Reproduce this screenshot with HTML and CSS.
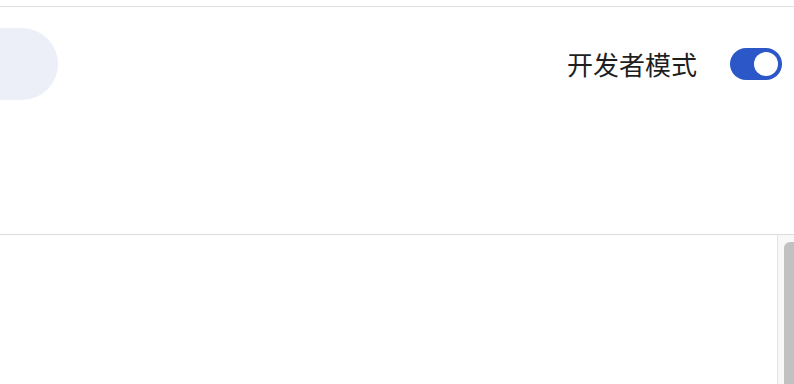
FILE: index.html
```html
<!DOCTYPE html>
<html lang="zh-CN">
<head>
    <meta charset="UTF-8">
    <meta name="viewport" content="width=device-width, initial-scale=1.0">
    <title>扩展程序</title>
    <link rel="stylesheet" href="styles.css">
</head>
<body>
    <div class="top-strip"></div>
    <header class="toolbar">
        <div class="toolbar-row">
            <div class="search-pill"></div>
            <div class="dev-mode">
                <span class="dev-label">开发者模式</span>
                <label class="switch">
                    <input type="checkbox" checked>
                    <span class="knob"></span>
                </label>
            </div>
        </div>
    </header>
    <main class="content">
        <div class="list"></div>
        <div class="scrollbar">
            <div class="thumb"></div>
        </div>
    </main>
</body>
</html>
```

FILE: styles.css
```css
body {
    margin: 0;
    font-family: "Noto Sans CJK SC", "Noto Sans", sans-serif;
    background: #ffffff;
    overflow: hidden;
    height: 384px;
    display: flex;
    flex-direction: column;
}

.top-strip {
    flex-shrink: 0;
    height: 6px;
    background: #ffffff;
}

.toolbar {
    flex-shrink: 0;
    border-top: 1px solid #dfdfe1;
    border-bottom: 1px solid #dcdce0;
    height: 229px;
    box-sizing: border-box;
    padding-top: 21px;
}

.toolbar-row {
    display: flex;
    justify-content: space-between;
    align-items: center;
    height: 72px;
}

.search-pill {
    width: 100px;
    height: 72px;
    margin-left: -42px;
    border-radius: 36px;
    background: #eceff7;
}

.dev-mode {
    display: flex;
    align-items: center;
    gap: 33px;
    margin-right: 12px;
}

.dev-label {
    font-size: 26px;
    color: #1f1f1f;
    line-height: 32px;
}

.switch {
    position: relative;
    display: block;
    width: 52px;
    height: 32px;
    border-radius: 16px;
    background: #2b57c9;
}

.switch input {
    display: none;
}

.knob {
    position: absolute;
    top: 4px;
    right: 4px;
    width: 24px;
    height: 24px;
    border-radius: 50%;
    background: #ffffff;
}

.content {
    flex: 1;
    min-height: 0;
    display: flex;
}

.list {
    flex: 1;
}

.scrollbar {
    width: 17px;
    box-sizing: border-box;
    border-left: 1px solid #e4e4e4;
    background: #f8f8f8;
    padding: 7px 0 0 6px;
    display: flex;
    flex-direction: column;
}

.thumb {
    flex: 1;
    background: #c1c1c1;
    border-radius: 6px 0 0 0;
}
```
